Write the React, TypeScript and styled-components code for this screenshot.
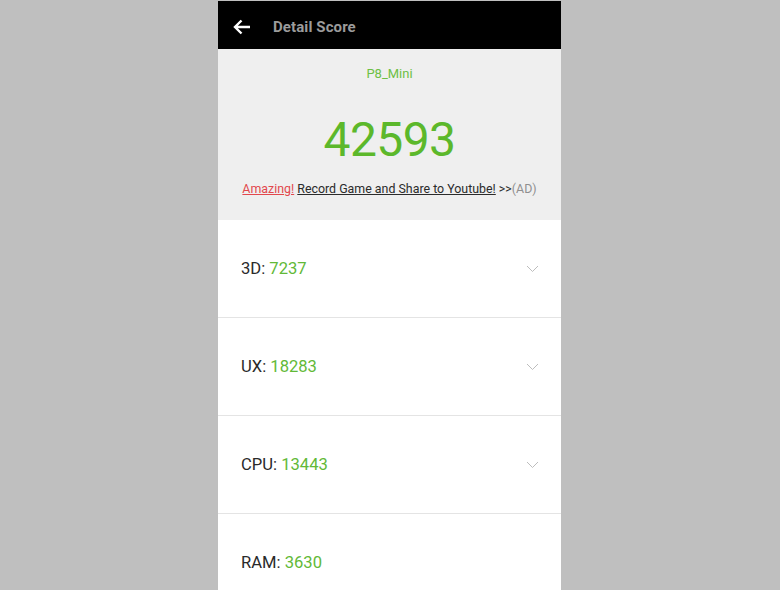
import React from 'react';
import styled, { createGlobalStyle } from 'styled-components';

const GlobalStyle = createGlobalStyle`
  html, body {
    margin: 0;
    padding: 0;
    background: #bfbfbf;
    font-family: Roboto, "Noto Sans", "Liberation Sans", sans-serif;
  }
`;

const Page = styled.div`
  width: 780px;
  height: 590px;
  padding-top: 1px;
  box-sizing: border-box;
  display: flex;
  justify-content: center;
  overflow: hidden;
`;

const Screen = styled.div`
  width: 343px;
  margin-left: -1px;
  display: flex;
  flex-direction: column;
  background: #ffffff;
`;

const Header = styled.div`
  height: 48px;
  box-sizing: border-box;
  padding: 4px 0 0 14px;
  background: #000000;
  display: flex;
  align-items: center;
  flex-shrink: 0;
`;

const BackButton = styled.div`
  width: 20px;
  height: 20px;
  display: flex;
  align-items: center;
  justify-content: center;
  margin-right: 21px;
`;

const Title = styled.div`
  color: #9b9b9b;
  font-size: 15px;
  font-weight: 700;
  letter-spacing: 0.1px;
`;

const ScoreSection = styled.div`
  background: #efefef;
  height: 171px;
  display: flex;
  flex-direction: column;
  align-items: center;
  flex-shrink: 0;
`;

const DeviceName = styled.div`
  margin-top: 17px;
  color: #6dbf45;
  font-size: 13px;
  line-height: 16px;
`;

const TotalScore = styled.div`
  margin-top: 34px;
  color: #5cb82b;
  font-size: 48px;
  line-height: 48px;
  letter-spacing: -0.6px;
`;

const AdLine = styled.div`
  margin-top: 18px;
  font-size: 12.4px;
  line-height: 14px;
  color: #2b2b2b;
  white-space: nowrap;
`;

const AdLink = styled.span<{ accent?: boolean }>`
  text-decoration: underline;
  color: ${p => (p.accent ? '#e2484d' : '#2b2b2b')};
`;

const AdTag = styled.span`
  color: #8f8f8f;
`;

const Row = styled.div`
  height: 97px;
  border-bottom: 1px solid #e4e4e4;
  display: flex;
  align-items: center;
  justify-content: space-between;
  padding: 0 22px 0 23px;
  flex-shrink: 0;
`;

const RowLabel = styled.div`
  font-size: 16.6px;
  color: #2a2a2a;
`;

const RowValue = styled.span`
  color: #62b937;
`;

const Chevron = styled.svg`
  width: 13px;
  height: 8px;
`;

const rows = [
  { label: '3D', value: 7237, expandable: true },
  { label: 'UX', value: 18283, expandable: true },
  { label: 'CPU', value: 13443, expandable: true },
  { label: 'RAM', value: 3630, expandable: false },
];

const App: React.FC = () => {
  return (
    <Page>
      <GlobalStyle />
      <Screen>
        <Header>
          <BackButton>
            <svg width="18" height="16" viewBox="0 0 18 16">
              <path d="M17 8H2M8.5 1.5L2 8l6.5 6.5" stroke="#ffffff" strokeWidth="2.4" fill="none" />
            </svg>
          </BackButton>
          <Title>Detail Score</Title>
        </Header>

        <ScoreSection>
          <DeviceName>P8_Mini</DeviceName>
          <TotalScore>42593</TotalScore>
          <AdLine>
            <AdLink accent>Amazing!</AdLink> <AdLink>Record Game and Share to Youtube!</AdLink> &gt;&gt;
            <AdTag>(AD)</AdTag>
          </AdLine>
        </ScoreSection>

        {rows.map(r => (
          <Row key={r.label}>
            <RowLabel>
              {r.label}: <RowValue>{r.value}</RowValue>
            </RowLabel>
            {r.expandable && (
              <Chevron viewBox="0 0 13 8">
                <path d="M1 1l5.5 5.5L12 1" stroke="#bdbdbd" strokeWidth="1" fill="none" />
              </Chevron>
            )}
          </Row>
        ))}
      </Screen>
    </Page>
  );
};

export default App;
